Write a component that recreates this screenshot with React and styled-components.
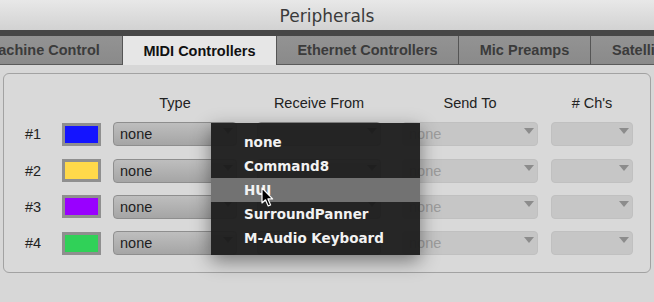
import React from "react";
import styled, { createGlobalStyle } from "styled-components";

const GlobalStyle = createGlobalStyle`
  html, body {
    margin: 0;
    padding: 0;
    background: #d7d7d7;
  }
  body {
    font-family: "Liberation Sans", Arial, sans-serif;
    overflow: hidden;
  }
`;

const Window = styled.div`
  position: relative;
  width: 654px;
  height: 302px;
  overflow: hidden;
  background: #d7d7d7;
`;

const TitleBar = styled.div`
  height: 30px;
  display: flex;
  align-items: center;
  justify-content: center;
  background: linear-gradient(#e8e8e8, #d2d2d2);
`;

const Title = styled.span`
  font-family: "DejaVu Sans", sans-serif;
  font-size: 17px;
  color: #3a3a3a;
  margin-top: 1px;
`;

const TabStrip = styled.div`
  display: flex;
  height: 35px;
  border-top: 6px solid #474747;
  box-sizing: border-box;
  overflow: hidden;
`;

const Tab = styled.div`
  flex: none;
  width: ${({ width }) => width}px;
  margin-left: ${({ offset }) => offset || 0}px;
  box-sizing: border-box;
  display: flex;
  align-items: center;
  justify-content: ${({ left }) => (left ? "flex-start" : "center")};
  padding-left: ${({ left }) => (left ? 21 : 0)}px;
  font-size: 14.5px;
  font-weight: bold;
  white-space: nowrap;
  color: ${({ active }) => (active ? "#111" : "#3b3b3b")};
  background: ${({ active }) =>
    active ? "#e6e6e6" : "linear-gradient(#939393, #8a8a8a)"};
  border-right: 1px solid #555;
  border-bottom: ${({ active }) => (active ? "none" : "1px solid #5a5a5a")};
`;

const Body = styled.div`
  padding: 8px 0 0 3px;
`;

const Panel = styled.div`
  width: 648px;
  height: 200px;
  box-sizing: border-box;
  border: 1px solid #a2a2a2;
  border-radius: 6px;
  background: #d9d9d9;
  padding: 20px 0 0 21px;
`;

const Grid = styled.div`
  display: grid;
  grid-template-columns: 37px 51px 144px 145px 149px 82px;
  grid-template-rows: 16px repeat(4, 24px);
  row-gap: 12.3px;
  align-items: center;

  & > :nth-child(-n + 6) {
    margin-bottom: -2px;
  }
`;

const Header = styled.div`
  width: ${({ w }) => w}px;
  text-align: center;
  font-size: 14.5px;
  line-height: 16px;
  color: #222;
  white-space: nowrap;
`;

const RowLabel = styled.div`
  font-size: 14.5px;
  color: #222;
`;

const Swatch = styled.div`
  width: 39px;
  height: 23px;
  box-sizing: border-box;
  border: 3px solid #8f8f8f;
  background: ${({ color }) => color};
`;

const Select = styled.div`
  width: ${({ w }) => w}px;
  height: 24px;
  box-sizing: border-box;
  border-radius: 4px;
  display: flex;
  align-items: flex-start;
  padding: 0 3px 0 6px;
  font-size: 14.5px;
  line-height: 22px;
  color: ${({ disabled }) => (disabled ? "#9c9c9c" : "#1e1e1e")};
  background: ${({ disabled }) =>
    disabled ? "#c6c6c6" : "linear-gradient(#bebebe, #a5a5a5)"};
  border: 1px solid ${({ disabled }) => (disabled ? "#c0c0c0" : "#8e8e8e")};
`;

const Arrow = styled.span`
  margin-left: auto;
  margin-top: 5px;
  width: 0;
  height: 0;
  border-left: 5px solid transparent;
  border-right: 5px solid transparent;
  border-top: 6px solid ${({ disabled }) => (disabled ? "#8c8c8c" : "#444")};
`;

const Menu = styled.ul`
  position: absolute;
  left: 211px;
  top: 123px;
  width: 209px;
  margin: 0;
  padding: 7px 0 5px;
  list-style: none;
  background: rgba(30, 30, 30, 0.96);
  box-shadow: 0 6px 18px rgba(0, 0, 0, 0.45);
`;

const MenuItem = styled.li`
  height: 24px;
  line-height: 24px;
  padding-left: 33px;
  font-family: "DejaVu Sans", sans-serif;
  font-weight: bold;
  font-size: 13.5px;
  color: #f2f2f2;
  background: ${({ hover }) => (hover ? "#727272" : "transparent")};
`;

const Cursor = styled.svg`
  position: absolute;
  left: 261px;
  top: 187px;
`;

const colors = ["#1414ff", "#ffd94a", "#9900ff", "#30d158"];
const menuItems = ["none", "Command8", "HUI", "SurroundPanner", "M-Audio Keyboard"];

const Dropdown = ({ w, disabled, value }) => (
  <Select w={w} disabled={disabled}>
    {value}
    <Arrow disabled={disabled} />
  </Select>
);

const App = () => {
  return (
    <>
      <GlobalStyle />
      <Window>
        <TitleBar>
          <Title>Peripherals</Title>
        </TitleBar>
        <TabStrip>
          <Tab width={159} offset={-36}>
            Machine Control
          </Tab>
          <Tab width={154} active>
            MIDI Controllers
          </Tab>
          <Tab width={182}>Ethernet Controllers</Tab>
          <Tab width={132}>Mic Preamps</Tab>
          <Tab width={100} left>
            Satellites
          </Tab>
        </TabStrip>
        <Body>
          <Panel>
            <Grid>
              <div />
              <div />
              <Header w={124}>Type</Header>
              <Header w={124}>Receive From</Header>
              <Header w={136}>Send To</Header>
              <Header w={82}># Ch's</Header>
              {colors.map((c, i) => (
                <React.Fragment key={c}>
                  <RowLabel>#{i + 1}</RowLabel>
                  <Swatch color={c} />
                  <Dropdown w={124} value="none" />
                  <Dropdown w={124} value="" />
                  <Dropdown w={136} value="none" disabled />
                  <Dropdown w={82} value="" disabled />
                </React.Fragment>
              ))}
            </Grid>
          </Panel>
        </Body>
        <Menu>
          {menuItems.map((m) => (
            <MenuItem key={m} hover={m === "HUI"}>
              {m}
            </MenuItem>
          ))}
        </Menu>
        <Cursor width="14" height="21" viewBox="0 0 14 21">
          <path
            d="M1 1 L1 16 L4.5 12.8 L7.2 19 L9.6 18 L7 11.9 L11.6 11.9 Z"
            fill="#000"
            stroke="#fff"
            strokeWidth="1.2"
            strokeLinejoin="round"
          />
        </Cursor>
      </Window>
    </>
  );
};

export default App;
